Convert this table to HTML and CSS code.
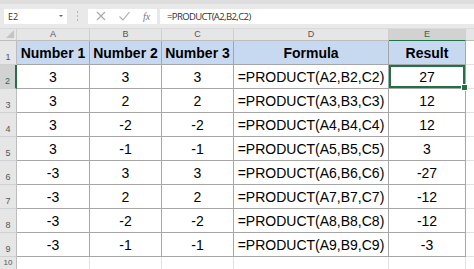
FILE: index.html
```html
<!DOCTYPE html>
<html>
<head>
<meta charset="utf-8">
<link rel="stylesheet" href="styles.css">
</head>
<body>
<div class="bar">
  <div class="namebox"><span>E2</span><span class="caret"></span></div>
  <div class="sep"><i></i><i></i><i></i></div>
  <div class="iconbox">
    <svg class="ico" width="12" height="12" viewBox="0 0 12 12"><path d="M2 2 L10 10 M10 2 L2 10" stroke="#a8a8a8" stroke-width="1.1" fill="none"/></svg>
    <svg class="ico" width="13" height="12" viewBox="0 0 13 12"><path d="M1.5 6.5 L5 10 L11.5 2" stroke="#a8a8a8" stroke-width="1.1" fill="none"/></svg>
    <span class="fx">fx</span>
  </div>
  <div class="input">=PRODUCT(A2,B2,C2)</div>
</div>
<div class="sheet">
  <div class="corner"><svg width="10" height="10" viewBox="0 0 10 10"><path d="M9 1 L9 9 L1 9 Z" fill="#c4c4c4"/></svg></div>
  <div class="ch">A</div><div class="ch">B</div><div class="ch">C</div><div class="ch">D</div><div class="ch sel">E</div><div class="ch last"></div>

  <div class="rh">1</div>
  <div class="c hd">Number 1</div><div class="c hd">Number 2</div><div class="c hd">Number 3</div><div class="c hd">Formula</div><div class="c hd">Result</div><div class="c empty"></div>

  <div class="rh rsel">2</div>
  <div class="c">3</div><div class="c">3</div><div class="c">3</div><div class="c">=PRODUCT(A2,B2,C2)</div><div class="c active">27</div><div class="c empty"></div>

  <div class="rh">3</div>
  <div class="c">3</div><div class="c">2</div><div class="c">2</div><div class="c">=PRODUCT(A3,B3,C3)</div><div class="c">12</div><div class="c empty"></div>

  <div class="rh">4</div>
  <div class="c">3</div><div class="c">-2</div><div class="c">-2</div><div class="c">=PRODUCT(A4,B4,C4)</div><div class="c">12</div><div class="c empty"></div>

  <div class="rh">5</div>
  <div class="c">3</div><div class="c">-1</div><div class="c">-1</div><div class="c">=PRODUCT(A5,B5,C5)</div><div class="c">3</div><div class="c empty"></div>

  <div class="rh">6</div>
  <div class="c">-3</div><div class="c">3</div><div class="c">3</div><div class="c">=PRODUCT(A6,B6,C6)</div><div class="c">-27</div><div class="c empty"></div>

  <div class="rh">7</div>
  <div class="c">-3</div><div class="c">2</div><div class="c">2</div><div class="c">=PRODUCT(A7,B7,C7)</div><div class="c">-12</div><div class="c empty"></div>

  <div class="rh">8</div>
  <div class="c">-3</div><div class="c">-2</div><div class="c">-2</div><div class="c">=PRODUCT(A8,B8,C8)</div><div class="c">-12</div><div class="c empty"></div>

  <div class="rh">9</div>
  <div class="c">-3</div><div class="c">-1</div><div class="c">-1</div><div class="c">=PRODUCT(A9,B9,C9)</div><div class="c">-3</div><div class="c empty"></div>

  <div class="rh r10">10</div>
  <div class="e"></div><div class="e"></div><div class="e"></div><div class="e"></div><div class="e"></div><div class="e"></div>
</div>
</body>
</html>
```
FILE: styles.css
```css
* { box-sizing: border-box; }
html, body { margin: 0; padding: 0; background: #fff; }
body { width: 474px; height: 269px; overflow: hidden; font-family: "Liberation Sans", Arial, sans-serif; }

.bar {
  height: 29px;
  background: #e9e9e9;
  border-top: 4px solid #dedede;
  border-bottom: 1px solid #dadada;
  display: flex;
  align-items: center;
  padding-left: 4px;
  font-family: "Open Sans", "Noto Sans", sans-serif;
}
.namebox {
  width: 63px; height: 15px; background: #fff;
  display: flex; align-items: center; justify-content: space-between;
  padding: 0 4px 0 4px;
  font-size: 9px; color: #333;
}
.caret {
  width: 0; height: 0;
  border-left: 2px solid transparent; border-right: 2px solid transparent;
  border-top: 2px solid #666;
}
.sep {
  width: 21px; height: 15px;
  display: flex; flex-direction: column; align-items: center; justify-content: center; gap: 2px;
}
.sep i { width: 1px; height: 2px; background: #b8b8b8; display: block; }
.iconbox {
  width: 69px; height: 15px; background: #fff;
  display: flex; align-items: center; gap: 11px; padding-left: 7px;
}
.fx { font-family: "Liberation Serif", serif; font-style: italic; font-size: 10px; color: #777; margin-left: 1px; }
.input {
  flex: 1; height: 15px; background: #fff; margin-left: 3px;
  font-size: 9.5px; letter-spacing: -0.6px; color: #333;
  padding-left: 7px; line-height: 15px;
}

.sheet {
  display: grid;
  grid-template-columns: 17px 73px 72px 72px 155px 77px 1fr;
  grid-template-rows: 12px repeat(9, 24px) 1fr;
  height: 240px;
}
.corner {
  background: #e6e6e6;
  border-right: 1px solid #cfcfcf; border-bottom: 1px solid #bdbdbd;
  display: flex; align-items: flex-end; justify-content: flex-end; padding: 0 1px 1px 0;
}
.ch {
  background: #e6e6e6;
  border-right: 1px solid #cfcfcf; border-bottom: 1px solid #bdbdbd;
  font-size: 9px; color: #555; text-align: center; line-height: 11px;
}
.ch.sel { background: #d2d2d2; border-bottom: 1px solid #217346; color: #217346; }
.ch.last { border-right: none; }
.rh {
  background: #e6e6e6;
  border-right: 1px solid #bdbdbd; border-bottom: 1px solid #d0d0d0;
  font-size: 9px; color: #555;
  display: flex; align-items: flex-end; justify-content: center; padding-bottom: 2px;
}
.rh.rsel { background: #d2d2d2; border-right: 2px solid #217346; color: #217346; }
.rh.r10 { align-items: flex-start; padding-top: 1px; line-height: 10px; font-size: 8px; }
.c {
  border-right: 1px solid #a6a6a6; border-bottom: 1px solid #a6a6a6;
  font-size: 14px; color: #000;
  display: flex; align-items: center; justify-content: center;
  padding-top: 1px;
}
.c.hd { background: #c7d9f1; font-weight: bold; }
.c.empty { border-right: none; border-bottom: 1px solid #e1e1e1; }
.c.active { position: relative; box-shadow: inset 0 0 0 2px #217346; }
.c.active::after {
  content: ""; position: absolute; right: -3px; bottom: -3px;
  width: 5px; height: 5px; background: #217346; border: 1px solid #fff;
}
.e { border-right: 1px solid #e1e1e1; }
.e:last-child { border-right: none; }
```
